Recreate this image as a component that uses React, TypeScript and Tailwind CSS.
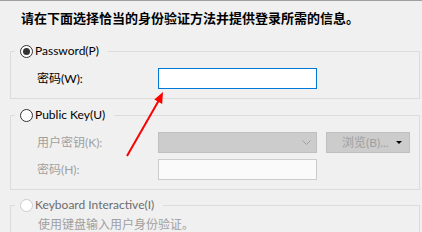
import React from 'react';

const font = { fontFamily: 'Lato, "Noto Sans CJK SC", sans-serif' };

function Radio({ checked = false, disabled = false }: { checked?: boolean; disabled?: boolean }) {
  return (
    <span
      className={`flex h-[13px] w-[13px] shrink-0 items-center justify-center rounded-full border bg-white ${
        disabled ? 'border-[#cccccc]' : 'border-[#333333]'
      }`}
    >
      {checked && <span className="h-[7px] w-[7px] rounded-full bg-[#333333]" />}
    </span>
  );
}

function GroupLegend({ label, checked, disabled }: { label: string; checked?: boolean; disabled?: boolean }) {
  return (
    <legend className="ml-[4px] flex h-[16px] items-center gap-[2px] pl-[5px] pr-[9px]">
      <Radio checked={checked} disabled={disabled} />
      <span className={`text-[12px] leading-[16px] ${disabled ? 'text-[#6d6d6d]' : 'text-black'}`}>{label}</span>
    </legend>
  );
}

export default function App() {
  return (
    <div
      className="relative h-[232px] w-[422px] overflow-hidden border-t border-[#a0a0a0] bg-[#f0f0f0]"
      style={font}
    >
      {/* Heading */}
      <div className="pl-[21px] pt-[9px] text-[13px] font-bold leading-[17px] text-black">
        请在下面选择恰当的身份验证方法并提供登录所需的信息。
      </div>

      {/* Password */}
      <fieldset className="ml-[10px] mt-[16px] w-[410px] border border-[#dcdcdc]">
        <GroupLegend label="Password(P)" checked />
        <div className="flex items-center pb-[9px] pl-[26px] pt-[9px]">
          <span className="w-[121px] text-[12px] leading-[16px] text-black">密码(W):</span>
          <div className="h-[21px] w-[159px] border border-[#0078d7] bg-white" />
        </div>
      </fieldset>

      {/* Public Key */}
      <fieldset className="ml-[10px] mt-[8px] w-[410px] border border-[#dcdcdc]">
        <GroupLegend label="Public Key(U)" />
        <div className="flex flex-col gap-[6px] pb-[9px] pl-[26px] pt-[9px]">
          <div className="flex items-center">
            <span className="w-[121px] text-[12px] leading-[16px] text-[#a0a0a0]">用户密钥(K):</span>
            <div className="flex h-[21px] w-[159px] items-center justify-end border border-[#bfbfbf] bg-[#cccccc] pr-[5px]">
              <svg width="9" height="5" viewBox="0 0 9 5" fill="none">
                <path d="M0.5 0.5 L4.5 4.5 L8.5 0.5" stroke="#a0a0a0" strokeWidth="1" />
              </svg>
            </div>
            <div className="ml-[9px] flex h-[21px] w-[84px] items-center border border-[#bfbfbf] bg-[#cccccc] pl-[15px]">
              <span className="text-[12px] leading-[16px] text-[#a0a0a0]">浏览(B)...</span>
              <svg className="ml-[7px]" width="6" height="3" viewBox="0 0 6 3">
                <path d="M0 0 L6 0 L3 3 Z" fill="#000000" />
              </svg>
            </div>
          </div>
          <div className="flex items-center">
            <span className="w-[121px] text-[12px] leading-[16px] text-[#a0a0a0]">密码(H):</span>
            <div className="h-[21px] w-[159px] border border-[#cccccc] bg-[#fafafa]" />
          </div>
        </div>
      </fieldset>

      {/* Keyboard Interactive */}
      <fieldset className="ml-[10px] mt-[7px] w-[410px] border border-[#dcdcdc]">
        <GroupLegend label="Keyboard Interactive(I)" disabled />
        <div className="pb-[9px] pl-[27px] pt-[4px] text-[12px] leading-[16px] text-[#a0a0a0]">
          使用键盘输入用户身份验证。
        </div>
      </fieldset>

      {/* Annotation arrow */}
      <svg className="pointer-events-none absolute left-0 top-0" width="422" height="232" viewBox="0 0 422 232">
        <line x1="127" y1="155" x2="158.5" y2="100" stroke="#ff0000" strokeWidth="2" />
        <polygon points="163,91 162.2,103 154.3,98.5" fill="#ff0000" />
      </svg>
    </div>
  );
}
